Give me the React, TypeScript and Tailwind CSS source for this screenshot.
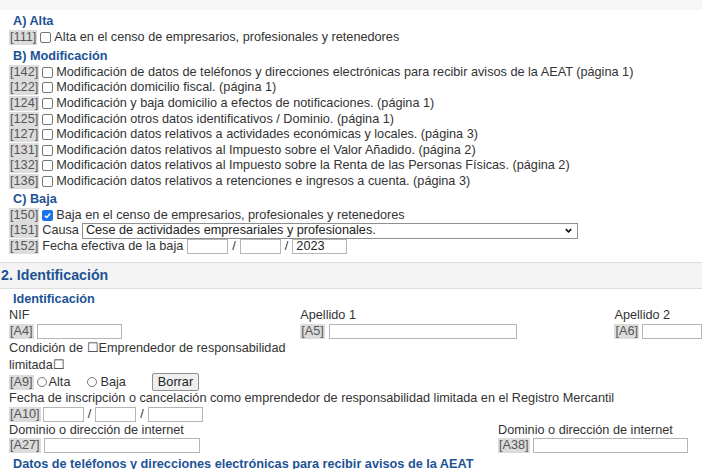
import React from "react";

const headBlue = "text-[#1d5396]";

function Code({ children }: { children: React.ReactNode }) {
  return <span className="bg-[#dcdcdc] px-[1px] text-[#555]">{children}</span>;
}

function Box({ checked = false }: { checked?: boolean }) {
  return checked ? (
    <span className="mx-[3px] inline-flex h-[11px] w-[11px] items-center justify-center rounded-[2px] bg-[#1a73e8]">
      <svg viewBox="0 0 10 10" className="h-[9px] w-[9px]">
        <path d="M2 5.2 L4.2 7.3 L8 2.8" fill="none" stroke="white" strokeWidth="1.6" />
      </svg>
    </span>
  ) : (
    <span className="mx-[3px] inline-block h-[11px] w-[11px] rounded-[2px] border border-[#767676] bg-white" />
  );
}

function Field({ w }: { w: string }) {
  return <span className={`inline-block h-[15px] border border-[#b5b5b5] bg-white ${w}`} />;
}

function Row({ code, children, checked }: { code: string; children: React.ReactNode; checked?: boolean }) {
  return (
    <div className="flex h-[15.6px] items-center">
      <Code>[{code}]</Code>
      <Box checked={checked} />
      <span>{children}</span>
    </div>
  );
}

export default function App() {
  return (
    <div className="min-h-[469px] w-[702px] overflow-hidden bg-white font-['Liberation_Sans',Arial,sans-serif] text-[12.7px] leading-[15px] text-[#333]">
      <div className="h-[10px] bg-[#f6f6f6]" />
      <div className="pl-[9px]">
        <div className={`mt-[4px] pl-[4px] font-bold ${headBlue}`}>A) Alta</div>
        <div className="mt-[1px]">
          <Row code="111">Alta en el censo de empresarios, profesionales y retenedores</Row>
        </div>
        <div className={`mt-[3px] pl-[4px] font-bold ${headBlue}`}>B) Modificación</div>
        <div className="mt-[1px]">
          <Row code="142">Modificación de datos de teléfonos y direcciones electrónicas para recibir avisos de la AEAT (página 1)</Row>
          <Row code="122">Modificación domicilio fiscal. (página 1)</Row>
          <Row code="124">Modificación y baja domicilio a efectos de notificaciones. (página 1)</Row>
          <Row code="125">Modificación otros datos identificativos / Dominio. (página 1)</Row>
          <Row code="127">Modificación datos relativos a actividades económicas y locales. (página 3)</Row>
          <Row code="131">Modificación datos relativos al Impuesto sobre el Valor Añadido. (página 2)</Row>
          <Row code="132">Modificación datos relativos al Impuesto sobre la Renta de las Personas Físicas. (página 2)</Row>
          <Row code="136">Modificación datos relativos a retenciones e ingresos a cuenta. (página 3)</Row>
        </div>
        <div className={`mt-[3px] pl-[4px] font-bold ${headBlue}`}>C) Baja</div>
        <Row code="150" checked>
          Baja en el censo de empresarios, profesionales y retenedores
        </Row>
        <div className="flex h-[16px] items-center">
          <Code>[151]</Code>
          <span className="ml-[3px]">Causa</span>
          <span className="ml-[3px] flex h-[16px] w-[496px] items-center justify-between border border-[#8f8f8f] bg-white pr-[4px] pl-[3px] text-[#222]">
            Cese de actividades empresariales y profesionales.
            <svg viewBox="0 0 10 10" className="h-[9px] w-[9px]">
              <path d="M2 3.5 L5 6.5 L8 3.5" fill="none" stroke="#111" strokeWidth="1.8" />
            </svg>
          </span>
        </div>
        <div className="flex h-[16px] items-center">
          <Code>[152]</Code>
          <span className="ml-[3px] mr-[4px]">Fecha efectiva de la baja</span>
          <Field w="w-[41px]" />
          <span className="mx-[4px]">/</span>
          <Field w="w-[41px]" />
          <span className="mx-[4px]">/</span>
          <span className="inline-flex h-[15px] w-[55px] items-center border border-[#b5b5b5] bg-white pl-[3px] text-[#222]">2023</span>
        </div>
      </div>

      <div className="mt-[7px] flex h-[27px] items-center border-y border-[#dcdcdc] bg-[#f3f3f3] pl-[1px] text-[14.2px] font-bold text-[#1d5396]">
        2. Identificación
      </div>

      <div className="pl-[9px] pt-[3px]">
        <div className={`pl-[4px] font-bold ${headBlue}`}>Identificación</div>
        <div className="mt-[1px] flex">
          <div className="w-[293px]">
            <div className="h-[16px]">NIF</div>
            <div className="flex h-[16px] items-center">
              <Code>[A4]</Code>
              <Field w="ml-[3px] w-[85px]" />
            </div>
            <div className="w-[290px] leading-[17px]">
              Condición de ☐Emprendedor de responsabilidad limitada☐
            </div>
            <div className="flex h-[17px] items-center">
              <Code>[A9]</Code>
              <span className="ml-[3px] inline-block h-[10px] w-[10px] rounded-full border border-[#767676]" />
              <span className="ml-[2px]">Alta</span>
              <span className="ml-[17px] inline-block h-[10px] w-[10px] rounded-full border border-[#767676]" />
              <span className="ml-[3px]">Baja</span>
              <span className="ml-[26px] inline-flex h-[18px] items-center rounded-[2px] border border-[#8f8f8f] bg-[#efefef] px-[5px] text-[#222]">
                Borrar
              </span>
            </div>
          </div>
          <div className="w-[316px]">
            <div className="h-[16px]">Apellido 1</div>
            <div className="flex h-[16px] items-center">
              <Code>[A5]</Code>
              <Field w="ml-[4px] w-[188px]" />
            </div>
          </div>
          <div className="flex-1">
            <div className="h-[16px]">Apellido 2</div>
            <div className="flex h-[16px] items-center">
              <Code>[A6]</Code>
              <Field w="ml-[3px] w-[60px]" />
            </div>
          </div>
        </div>
        <div className="h-[16px]">Fecha de inscripción o cancelación como emprendedor de responsabilidad limitada en el Registro Mercantil</div>
        <div className="flex h-[16px] items-center">
          <Code>[A10]</Code>
          <Field w="ml-[2px] w-[41px]" />
          <span className="mx-[4px]">/</span>
          <Field w="w-[41px]" />
          <span className="mx-[4px]">/</span>
          <Field w="w-[55px]" />
        </div>
        <div className="flex">
          <div className="w-[489px]">
            <div className="h-[15px]">Dominio o dirección de internet</div>
            <div className="flex h-[16px] items-center">
              <Code>[A27]</Code>
              <Field w="ml-[3px] w-[156px]" />
            </div>
          </div>
          <div>
            <div className="h-[15px]">Dominio o dirección de internet</div>
            <div className="flex h-[16px] items-center">
              <Code>[A38]</Code>
              <Field w="ml-[3px] w-[155px]" />
            </div>
          </div>
        </div>
        <div className={`mt-[3px] pl-[4px] font-bold ${headBlue}`}>
          Datos de teléfonos y direcciones electrónicas para recibir avisos de la AEAT
        </div>
      </div>
    </div>
  );
}
